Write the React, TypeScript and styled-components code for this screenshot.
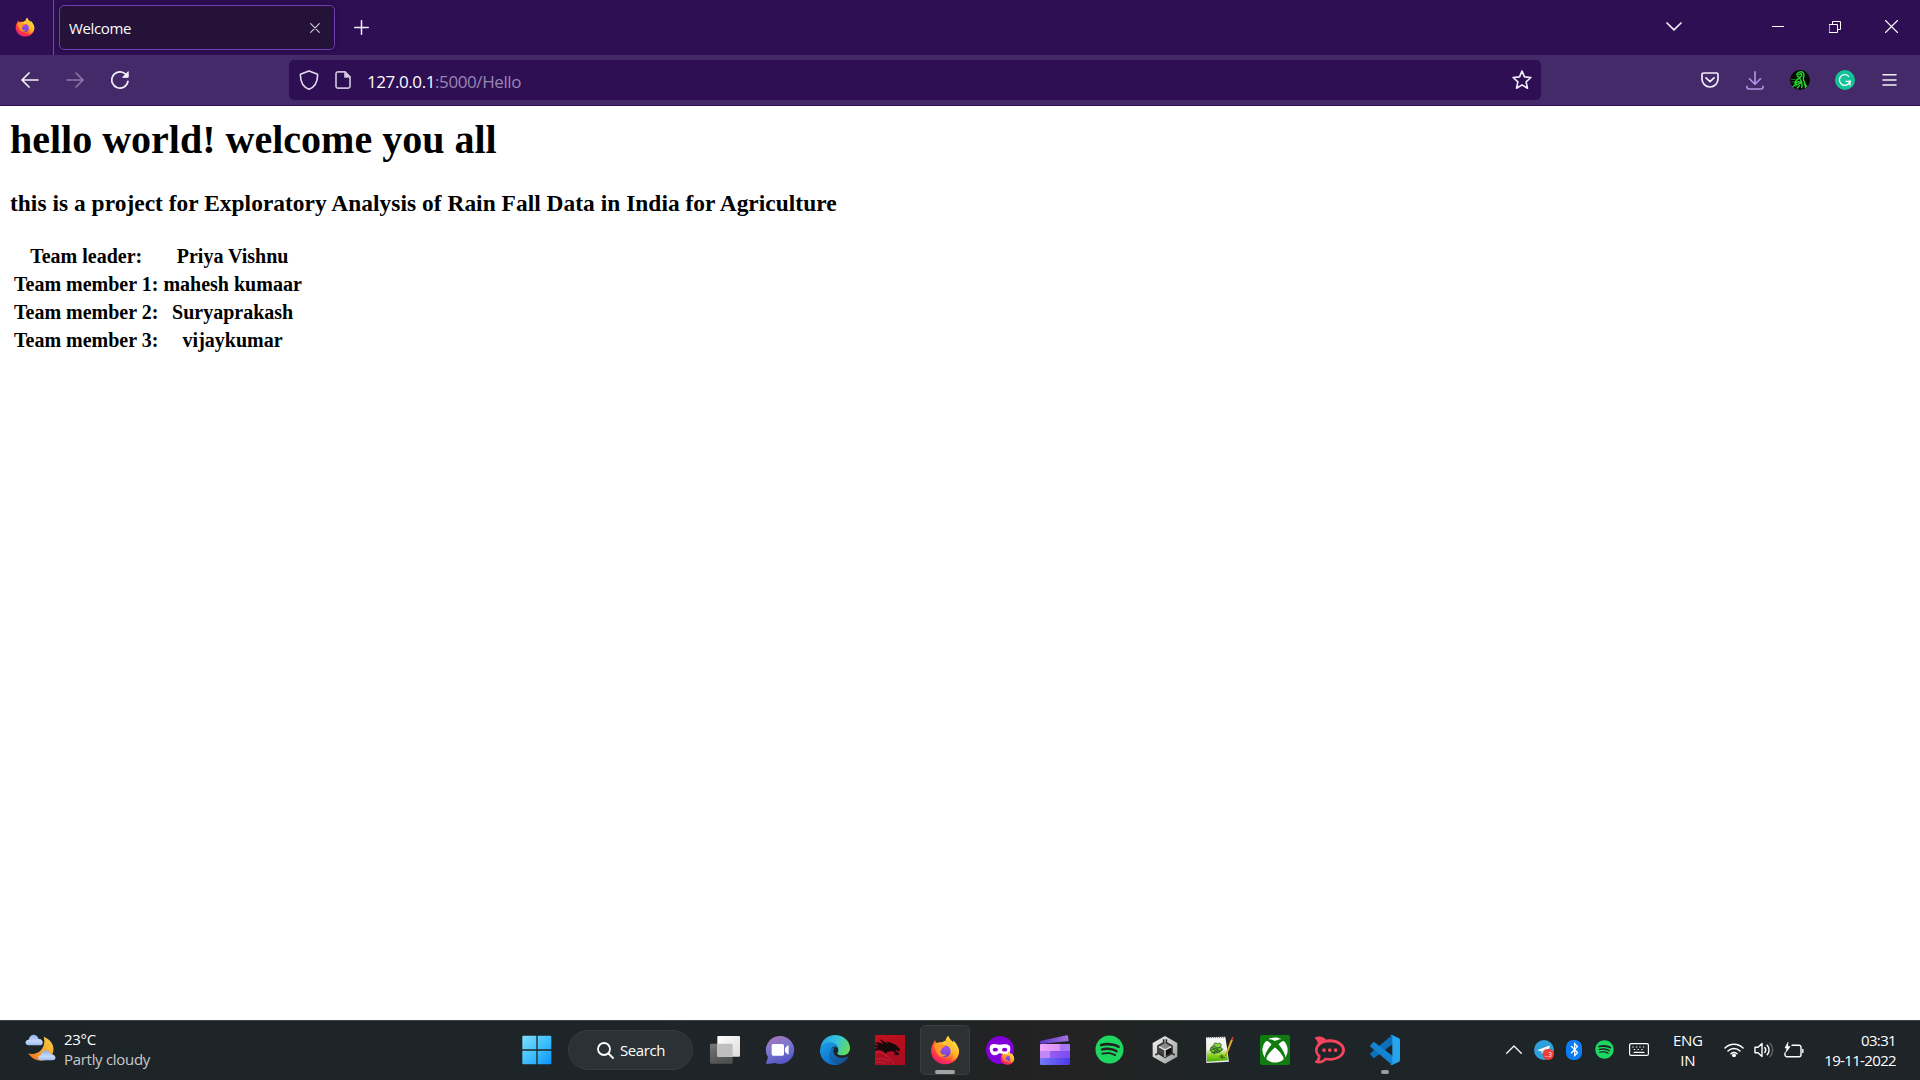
import React from "react";
import styled, { createGlobalStyle } from "styled-components";
import { FaSpotify, FaXbox, FaBluetoothB } from "react-icons/fa";
import { SiRocketdotchat } from "react-icons/si";

const GlobalStyle = createGlobalStyle`
  * { box-sizing: border-box; }
  html, body { margin: 0; padding: 0; background: #fff; overflow: hidden; }
  svg { display: block; flex: none; }
`;

const UI = `"Open Sans", "Noto Sans", sans-serif`;

const Screen = styled.div`
  width: 1920px;
  height: 1080px;
  display: flex;
  flex-direction: column;
  overflow: hidden;
  font-family: ${UI};
`;

/* ---------- browser chrome ---------- */

const TabBar = styled.header`
  height: 55px;
  flex: none;
  display: flex;
  background: #2e0f54;
`;

const PinnedArea = styled.div`
  width: 54px;
  border-right: 1px solid #6b5388;
  padding: 17px 0 0 15px;
`;

const Tab = styled.div`
  width: 276px;
  height: 45px;
  margin: 5px 0 0 5px;
  padding: 0 14px 0 9px;
  display: flex;
  align-items: center;
  justify-content: space-between;
  background: #251238;
  border: 1px solid #6f3fb5;
  border-radius: 5px;
  box-shadow: 0 0 5px rgba(10, 0, 25, 0.45);
`;

const TabTitle = styled.span`
  font-size: 15px;
  line-height: 20px;
  letter-spacing: -0.35px;
  color: #fbfbfe;
`;

const NewTab = styled.div`
  padding: 20px 0 0 19px;
`;

const WindowControls = styled.div`
  margin-left: auto;
  display: flex;
  height: 53px;
  align-items: center;
`;

const ControlSlot = styled.div<{ $w: number }>`
  width: ${(p) => p.$w}px;
  display: flex;
  justify-content: center;
`;

const Toolbar = styled.nav`
  height: 51px;
  flex: none;
  display: flex;
  align-items: flex-start;
  background: #452a6a;
  border-bottom: 1px solid #2e0f54;
`;

const ToolGroup = styled.div<{ $w: number; $pad: number }>`
  width: ${(p) => p.$w}px;
  height: 50px;
  padding-left: ${(p) => p.$pad}px;
  display: flex;
  align-items: center;
`;

const ToolButton = styled.div`
  width: 45px;
  display: flex;
  justify-content: center;
`;

const AddressBar = styled.div`
  width: 1252px;
  height: 40px;
  margin-top: 5px;
  padding: 0 9px 0 10px;
  display: flex;
  align-items: center;
  gap: 16px;
  background: #2e0f54;
  border-radius: 5px;
`;

const Url = styled.div`
  padding-top: 3px;
  font-size: 17px;
  line-height: 24px;
  letter-spacing: -0.41px;
  color: #fbfbfe;
  flex: 1;
`;

const UrlDim = styled.span`
  color: #9a86b3;
`;

/* ---------- page ---------- */

const Page = styled.main`
  flex: 1;
  padding: 11px 10px;
  background: #fff;
  color: #000;
  font-family: "Liberation Serif", "Times New Roman", serif;
`;

const Heading = styled.h1`
  margin: 0 0 27px;
  font-size: 40px;
  line-height: 46px;
  font-weight: bold;
`;

const SubHeading = styled.h3`
  margin: 0 0 24px;
  font-size: 23.4px;
  line-height: 27px;
  letter-spacing: 0.037px;
  font-weight: bold;
`;

const TeamTable = styled.table`
  border-spacing: 3px;
  font-size: 20px;
  line-height: 23px;
`;

const Cell = styled.th`
  padding: 1px;
  text-align: center;
  font-weight: bold;
  white-space: nowrap;
`;

/* ---------- taskbar ---------- */

const Taskbar = styled.footer`
  height: 60px;
  flex: none;
  display: flex;
  border-top: 1px solid #3c4345;
  background: linear-gradient(90deg, #1c2427 0%, #1e2528 25%, #1f2427 45%, #222222 53%, #222322 57%, #1e2528 65%, #1e2427 100%);
`;

const Weather = styled.div`
  width: 509px;
  padding: 8px 0 0 25px;
  display: flex;
  gap: 8px;
`;

const WeatherGlyph = styled.div`
  padding-top: 5px;
`;

const TwoLines = styled.div<{ $align?: string; $track?: number }>`
  font-size: 15px;
  line-height: 20px;
  letter-spacing: ${(p) => p.$track ?? -0.3}px;
  color: #fff;
  text-align: ${(p) => p.$align || "left"};
  white-space: nowrap;
`;

const Muted = styled.div`
  color: #c8cbcc;
`;

const Slot = styled.div<{ $w?: number }>`
  width: ${(p) => p.$w || 55}px;
  height: 59px;
  display: flex;
  flex-direction: column;
  align-items: center;
  padding-top: 4px;
`;

const AppTile = styled.div<{ $active?: boolean }>`
  width: 50px;
  height: 50px;
  border-radius: 5px;
  padding-top: 9px;
  display: flex;
  flex-direction: column;
  align-items: center;
  border: 1px solid ${(p) => (p.$active ? "#3a3e3f" : "transparent")};
  background: ${(p) => (p.$active ? "#2d3132" : "transparent")};
`;

const RunMark = styled.div<{ $w: number; $c: string }>`
  width: ${(p) => p.$w}px;
  height: 4px;
  margin-top: 5px;
  border-radius: 2px;
  background: ${(p) => p.$c};
`;

const SearchPill = styled.div`
  width: 125px;
  height: 40px;
  margin: 9px 4px 0 4px;
  padding-left: 28px;
  border: 1px solid #343c3f;
  border-radius: 20px;
  background: #2b3235;
  display: flex;
  align-items: center;
  gap: 6px;
  color: #fff;
  font-size: 15px;
  letter-spacing: -0.4px;
`;

const SearchLabel = styled.span`
  padding-bottom: 1px;
`;

const Tray = styled.div`
  margin-left: auto;
  display: flex;
  align-items: center;
  height: 57px;
`;

/* ---------- icons ---------- */

type P = { size?: number; id?: string };

const Firefox = ({ size = 30, id = "a" }: P) => (
  <svg width={size} height={size} viewBox="0 0 90 90">
    <defs>
      <radialGradient id={`ff1${id}`} cx="0.75" cy="0.12" r="1">
        <stop offset="0" stopColor="#fff44f" />
        <stop offset="0.3" stopColor="#ffc630" />
        <stop offset="0.52" stopColor="#ff8a1c" />
        <stop offset="0.76" stopColor="#ff3647" />
        <stop offset="1" stopColor="#e31587" />
      </radialGradient>
      <radialGradient id={`ff2${id}`} cx="0.6" cy="0.2" r="0.9">
        <stop offset="0" stopColor="#a34cf5" />
        <stop offset="1" stopColor="#5a45d6" />
      </radialGradient>
      <linearGradient id={`ff3${id}`} x1="0.8" y1="0" x2="0.3" y2="1">
        <stop offset="0" stopColor="#fff04d" />
        <stop offset="0.6" stopColor="#ffb52b" />
        <stop offset="1" stopColor="#ff7c22" />
      </linearGradient>
    </defs>
    <path fill={`url(#ff1${id})`} d="M9 26C11 22 13 19 15 15C16 19 18 22 20 24C25 21 31 21 36 22C39 20 42 18 45 17L54 24L72 22C83 32 88 43 87 52C86 73 69 88 46 88C22 88 3 70 3 47C3 39 5 33 9 26Z" />
    <path fill={`url(#ff3${id})`} d="M47 24C45 14 50 5 56 2C57 12 65 16 70 22C70 20 70 18 69 16C79 24 87 38 87 51C85 66 75 76 62 78C71 69 72 55 66 45C61 36 49 34 47 24Z" />
    <circle cx="44" cy="49" r="18" fill={`url(#ff2${id})`} />
    <path fill="#ff9825" d="M11 31C17 25 26 25 34 29C37 30 44 30 46 32C45 37 38 37 36 40C36 44 34 47 31 49C32 58 40 61 49 58C45 66 34 68 27 62C19 55 16 42 11 31Z" />
    <path fill="#fff" opacity="0.12" d="M20 24C25 21 31 21 36 22C33 26 32 28 31 30C25 27 18 28 14 31C15 28 17 26 20 24Z" />
  </svg>
);

const Line = ({ w, h, vb, sw = 1.5, c = "#f3effa", children }: { w: number; h: number; vb?: string; sw?: number; c?: string; children: React.ReactNode }) => (
  <svg width={w} height={h} viewBox={vb || `0 0 ${w} ${h}`} fill="none" stroke={c} strokeWidth={sw} strokeLinecap="round" strokeLinejoin="round">
    {children}
  </svg>
);

const GreenDragon = () => (
  <svg width="20" height="20" viewBox="0 0 60 60">
    <circle cx="30" cy="30" r="30" fill="#050805" />
    <g fill="none" stroke="#22dd2c" strokeWidth="4" strokeLinecap="round">
      <path d="M20 14C24 3 38 3 41 11C45 19 39 22 40 28C41 36 49 40 46 53" />
      <path d="M24 15L33 11L36 18L28 22L22 19M31 24C20 28 14 35 15 43C20 36 27 33 31 37" />
      <path d="M9 50C17 41 22 47 27 41C34 36 39 44 35 53M31 29L36 39M22 54L29 46M43 42L50 48" />
    </g>
    <path d="M3 29L12 28L20 31M4 37L14 35M12 43L20 51" fill="none" stroke="#129a1c" strokeWidth="2.5" />
  </svg>
);

const Grammarly = () => (
  <svg width="20" height="20" viewBox="0 0 60 60">
    <circle cx="30" cy="30" r="30" fill="#15c39a" />
    <path d="M41 19A16 16 0 1 0 45 33" fill="none" stroke="#fff" strokeWidth="4" strokeLinecap="round" />
    <path d="M33 34H45V45" fill="none" stroke="#fff" strokeWidth="4" strokeLinecap="round" strokeLinejoin="round" />
  </svg>
);

const WeatherIcon = () => (
  <svg width="31" height="29" viewBox="0 0 93 87">
    <defs>
      <linearGradient id="moon" x1="1" y1="0" x2="0.2" y2="1">
        <stop offset="0" stopColor="#f8ce45" />
        <stop offset="0.6" stopColor="#f5a531" />
        <stop offset="1" stopColor="#ee7420" />
      </linearGradient>
      <linearGradient id="cloud" x1="0" y1="0" x2="0" y2="1">
        <stop offset="0" stopColor="#8fb0ee" />
        <stop offset="0.6" stopColor="#c7d9fa" />
        <stop offset="1" stopColor="#9dbcf3" />
      </linearGradient>
    </defs>
    <path fill="url(#moon)" d="M56 8C79 17 91 37 83 58C74 83 33 92 9 58C20 62 38 60 49 47C58 36 60 23 56 8Z" />
    <path fill="url(#cloud)" d="M11 34C-1 34 -2 18 11 17C15 -3 37 -1 40 14C56 14 57 33 46 34Z" />
    <path fill="url(#cloud)" d="M48 79C37 79 36 65 48 63C52 46 72 46 76 60C94 60 96 78 83 79Z" />
  </svg>
);

const WindowsLogo = () => (
  <svg width="30" height="30" viewBox="0 0 90 90">
    <defs>
      <linearGradient id="win" gradientUnits="userSpaceOnUse" x1="0" y1="0" x2="90" y2="90">
        <stop offset="0" stopColor="#82e0ff" />
        <stop offset="0.5" stopColor="#3fc0fc" />
        <stop offset="1" stopColor="#0b92fa" />
      </linearGradient>
    </defs>
    <path fill="url(#win)" d="M4 2H43V43H1V5Q1 2 4 2ZM47 2H85Q88 2 88 5V43H47ZM1 47H43V88H4Q1 88 1 85ZM47 47H88V85Q88 88 85 88H47Z" />
  </svg>
);

const TaskView = () => (
  <svg width="30" height="30" viewBox="0 0 90 90">
    <defs>
      <linearGradient id="tvw" x1="0" y1="0" x2="1" y2="1"><stop offset="0" stopColor="#fff" /><stop offset="1" stopColor="#dcdcdc" /></linearGradient>
      <linearGradient id="tvg" x1="0" y1="0" x2="0.4" y2="1"><stop offset="0" stopColor="#777" /><stop offset="1" stopColor="#505151" /></linearGradient>
    </defs>
    <rect x="0" y="26" width="68" height="60" rx="3" fill="url(#tvg)" />
    <rect x="22" y="3" width="68" height="62" rx="3" fill="url(#tvw)" />
    <path d="M22 26H65Q68 26 68 29V65H25Q22 65 22 62Z" fill="#bfbfbf" />
  </svg>
);

const Chat = () => (
  <svg width="30" height="30" viewBox="0 0 90 90">
    <defs>
      <linearGradient id="chat" x1="0.2" y1="0" x2="0.6" y2="1">
        <stop offset="0" stopColor="#a974b8" />
        <stop offset="0.45" stopColor="#7a78d2" />
        <stop offset="1" stopColor="#5154c4" />
      </linearGradient>
    </defs>
    <path fill="url(#chat)" d="M46 3A42 42 0 1 1 30 84L7 87Q2 87 4 82L9 67A42 42 0 0 1 46 3Z" />
    <rect x="20" y="27" width="37" height="35" rx="5" fill="#fff" />
    <path d="M60 40L67 32Q71 29 71 33V56Q71 60 67 57L60 50Z" fill="#fff" />
  </svg>
);

const Edge = () => (
  <svg width="30" height="30" viewBox="0 0 90 90">
    <defs>
      <linearGradient id="ed1" x1="0" y1="0.3" x2="1" y2="0.6"><stop offset="0" stopColor="#24a6e4" /><stop offset="0.5" stopColor="#33c3dc" /><stop offset="1" stopColor="#67dd55" /></linearGradient>
      <linearGradient id="ed2" x1="0" y1="0" x2="0.6" y2="1"><stop offset="0" stopColor="#1fa1e6" /><stop offset="1" stopColor="#0b6cc9" /></linearGradient>
      <linearGradient id="ed3" x1="0" y1="0" x2="1" y2="0.8"><stop offset="0" stopColor="#1178c8" /><stop offset="1" stopColor="#164c8d" /></linearGradient>
    </defs>
    <path fill="url(#ed1)" d="M1 39C5 15 23 0 45 0C70 0 90 18 90 39C90 53 80 61 68 61C58 61 51 58 52 54C57 49 55 42 52 36C40 20 14 20 1 39Z" />
    <path fill="url(#ed2)" d="M0 45C3 28 16 22 30 22C45 22 55 32 56 42C49 31 38 32 33 44C27 64 40 86 61 86C53 90 48 90 44 90C20 90 -1 70 0 45Z" />
    <path fill="url(#ed3)" d="M45 36C36 38 26 47 27 60C28 75 38 87 50 88C65 88 76 80 84 69C86 66 83 64 80 66C60 74 41 65 40 49C40 43 42 39 45 36Z" />
  </svg>
);

const DragonTile = () => (
  <svg width="30" height="30" viewBox="0 0 90 90">
    <defs><linearGradient id="dr" x1="0" y1="0" x2="0.3" y2="1"><stop offset="0" stopColor="#c0101c" /><stop offset="1" stopColor="#a80d22" /></linearGradient></defs>
    <rect width="90" height="90" fill="url(#dr)" />
    <path fill="#160a0d" d="M0 24C9 21 17 24 25 27L13 12C25 18 34 24 41 26L34 19C47 23 59 26 67 34L75 43L74 50L67 46L60 47L70 53L73 59L62 61L56 58L62 54L54 49C46 49 40 49 35 52C39 57 30 55 26 50C18 45 10 43 0 48V42L10 38L0 36V31L12 31Z" />
    <path fill="none" stroke="#e0788a" strokeOpacity="0.5" strokeWidth="1.5" d="M0 52C12 49 24 53 35 62M0 74C16 69 32 71 45 80M0 84C14 79 27 82 36 89M30 60C44 68 54 78 59 90" />
  </svg>
);

const PrivateBrowsing = () => (
  <svg width="30" height="30" viewBox="0 0 90 90">
    <circle cx="45" cy="45" r="42" fill="#8000d7" />
    <path fill="#fff" d="M14 40C14 28 23 26 33 28C40 30 48 30 56 28C67 26 76 29 76 40C76 54 69 61 60 61C52 61 50 55 45 55C40 55 37 61 30 61C20 61 14 53 14 40Z" />
    <ellipse cx="31" cy="44" rx="8" ry="5.5" fill="#8000d7" />
    <ellipse cx="59" cy="44" rx="8" ry="5.5" fill="#8000d7" />
    <svg x="46" y="47" width="43" height="43" viewBox="0 0 90 90">
      <Firefox size={90} id="pb" />
    </svg>
  </svg>
);

const Clipchamp = () => (
  <svg width="30" height="30" viewBox="0 0 90 90">
    <defs>
      <linearGradient id="cc1" x1="0" y1="0" x2="1" y2="0"><stop offset="0" stopColor="#5c35c4" /><stop offset="1" stopColor="#a275e0" /></linearGradient>
      <linearGradient id="cc2" x1="0" y1="0" x2="1" y2="0"><stop offset="0" stopColor="#f0a6fa" /><stop offset="1" stopColor="#ca86f4" /></linearGradient>
      <linearGradient id="cc3" x1="0" y1="0" x2="1" y2="0"><stop offset="0" stopColor="#a066f0" /><stop offset="1" stopColor="#7a4bee" /></linearGradient>
      <linearGradient id="cc4" x1="0" y1="0" x2="1" y2="0"><stop offset="0" stopColor="#7678fa" /><stop offset="1" stopColor="#4e38e8" /></linearGradient>
    </defs>
    <path fill="url(#cc1)" d="M3 17L80 1Q84 0 84 4L86 18L3 27Q0 27 0 22Q0 18 3 17Z" />
    <path fill="url(#cc2)" d="M3 27H86Q90 27 90 31V48H0V30Q0 27 3 27Z" />
    <path fill="#a777f6" d="M60 27H86Q90 27 90 31V48H60Z" />
    <path fill="url(#cc3)" d="M0 48H90V69H0Z" />
    <path fill="#c286f7" d="M0 48H30V69H0Z" />
    <path fill="url(#cc4)" d="M0 69H90V86Q90 90 86 90H4Q0 90 0 86Z" />
  </svg>
);

const Unity = () => (
  <svg width="30" height="30" viewBox="0 0 90 90">
    <defs><linearGradient id="un" x1="0" y1="0" x2="1" y2="1"><stop offset="0" stopColor="#f5f5f5" /><stop offset="1" stopColor="#999" /></linearGradient></defs>
    <path fill="url(#un)" d="M45 3L82 24V65L45 86L8 65V24Z" />
    <path fill="#444" d="M45 45L25 33V56L45 68Z" />
    <path fill="#111" d="M45 45L66 33V56L45 68Z" />
    <path fill="#8a8a8a" d="M45 45L25 33L45 22L66 33Z" />
    <path fill="none" stroke="#303030" strokeWidth="5" d="M41 13V23L24 33V56M49 13V23L66 33V56M16 60L25 55L45 67L66 55L74 60" />
    <path fill="none" stroke="#e4e4e4" strokeWidth="4" d="M45 66V45L27 35M45 45L64 35" />
  </svg>
);

const NotepadPP = () => (
  <svg width="30" height="30" viewBox="0 0 90 90">
    <defs><linearGradient id="np" x1="0" y1="0" x2="0" y2="1"><stop offset="0" stopColor="#f7f7f7" /><stop offset="0.45" stopColor="#eef6dd" /><stop offset="0.72" stopColor="#8ad51c" /><stop offset="1" stopColor="#47a80b" /></linearGradient></defs>
    <path fill="#eee" d="M3 7L61 5L72 80L4 84Z" />
    <path fill="url(#np)" d="M5 12L61 12L69 76L6 80Z" />
    <path stroke="#777" strokeWidth="3" strokeDasharray="3 3" d="M6 8L60 7" />
    <g fill="none" stroke="#20301c" strokeWidth="2">
      <path fill="#63c32b" d="M19 36C24 30 36 33 40 38C49 34 54 41 49 46C43 53 26 58 19 50C14 46 16 41 19 36Z" />
      <path fill="#83d54b" d="M27 32C24 25 33 21 37 27C41 21 52 27 48 34C43 40 33 39 27 32Z" />
      <path d="M14 47L29 40L46 49L55 42M22 36L31 47L27 59M37 39L35 52L45 51M19 54L32 50" />
    </g>
    <path stroke="#e7a52b" strokeWidth="6" d="M81 14L64 57" />
    <path stroke="#b33f31" strokeWidth="6" d="M84 6L81 14" />
    <path stroke="#3b3520" strokeWidth="2" d="M64 57L62 62M42 67L50 59L48 70L54 62L52 69L60 67" fill="none" />
  </svg>
);

const XboxTile = styled.div`
  width: 30px;
  height: 30px;
  border-radius: 2px;
  background: #107c10;
  color: #fff;
  display: flex;
  align-items: center;
  justify-content: center;
`;

const VSCode = () => (
  <svg width="30" height="30" viewBox="0 0 90 90">
    <path fill="#0c70b9" d="M2 60Q-1 57 2 54L64 2Q66 0 69 1V26L14 68Q11 70 8 67Z" />
    <path fill="#1484d0" d="M2 30Q-1 33 2 36L64 88Q66 90 69 89V64L14 22Q11 20 8 23Z" />
    <path fill="#26a4ee" d="M66 0L86 9Q90 11 90 15V75Q90 79 86 81L66 90Q63 91 61 87Q67 89 67 83V7Q67 1 61 3Q63 -1 66 0Z" />
  </svg>
);

const Telegram = () => (
  <svg width="20" height="20" viewBox="0 0 60 60">
    <circle cx="30" cy="30" r="30" fill="#2fa0da" />
    <path fill="#fff" d="M9 31L45 17Q48 16 47 20L42 40L30 35L24 41L22 34Z" />
    <path fill="#a9cfe6" d="M22 34L41 21L27 35L24 41Z" />
    <circle cx="43" cy="43" r="17" fill="#f23c34" />
    <text x="43" y="50" fontFamily="Open Sans, sans-serif" fontSize="19" fill="#fff" textAnchor="middle">..3</text>
  </svg>
);

const BluetoothPill = styled.div`
  width: 16px;
  height: 20px;
  border-radius: 7px;
  background: #0a7cf5;
  color: #fff;
  display: flex;
  align-items: center;
  justify-content: center;
`;

const team: [string, string][] = [
  ["Team leader:", "Priya Vishnu"],
  ["Team member 1:", "mahesh kumaar"],
  ["Team member 2:", "Suryaprakash"],
  ["Team member 3:", "vijaykumar"],
];

const apps: { icon: React.ReactNode; active?: boolean; mark?: [number, string] }[] = [
  { icon: <TaskView /> },
  { icon: <Chat /> },
  { icon: <Edge /> },
  { icon: <DragonTile /> },
  { icon: <Firefox id="tb" />, active: true, mark: [20, "#a3a5a3"] },
  { icon: <PrivateBrowsing /> },
  { icon: <Clipchamp /> },
  { icon: <FaSpotify size={29} color="#1ed760" /> },
  { icon: <Unity /> },
  { icon: <NotepadPP /> },
  { icon: <XboxTile><FaXbox size={26} /></XboxTile> },
  { icon: <SiRocketdotchat size={30} color="#f5455c" /> },
  { icon: <VSCode />, mark: [8, "#9a9d9e"] },
];

export default function App() {
  return (
    <Screen>
      <GlobalStyle />
      <TabBar>
        <PinnedArea><Firefox size={20} id="pin" /></PinnedArea>
        <Tab>
          <TabTitle>Welcome</TabTitle>
          <Line w={10} h={10} sw={1.1} c="#d5d0dc"><path d="M.7.7L9.3 9.3M9.3.7L.7 9.3" /></Line>
        </Tab>
        <NewTab><Line w={15} h={15}><path d="M7.5.7V14.3M.7 7.5H14.3" /></Line></NewTab>
        <WindowControls>
          <ControlSlot $w={104}><Line w={16} h={9} sw={1.7}><path d="M1 1L8 7.8L15 1" /></Line></ControlSlot>
          <ControlSlot $w={104}><Line w={12} h={1} sw={2} c="#fff"><path d="M0 .5H12" /></Line></ControlSlot>
          <ControlSlot $w={10}><Line w={12} h={12} sw={1} c="#fff"><path d="M.5 3.5H8.5V11.5H.5ZM3.5 3.5V.5H11.5V8.5H8.5" /></Line></ControlSlot>
          <ControlSlot $w={103}><Line w={13} h={13} sw={1.1} c="#fff"><path d="M.5.5L12.5 12.5M12.5.5L.5 12.5" /></Line></ControlSlot>
        </WindowControls>
        <WindowEdge />
      </TabBar>
      <Toolbar>
        <ToolGroup $w={289} $pad={7}>
          <ToolButton><Line w={18} h={16} sw={1.7}><path d="M17 8H1.2M8 1L1 8L8 15" /></Line></ToolButton>
          <ToolButton><Line w={18} h={16} sw={1.5} c="#8d7aa5"><path d="M1 8H16.8M10 1L17 8L10 15" /></Line></ToolButton>
          <ToolButton>
            <Line w={18} h={18} sw={1.7}>
              <path d="M16.9 10.3A8.1 8.1 0 1 1 13.6 2.4L15.5 4" />
              <path d="M17.2 1V6.3H12Z" fill="#f3effa" strokeWidth="1" />
            </Line>
          </ToolButton>
        </ToolGroup>
        <AddressBar>
          <Line w={20} h={20} sw={1.6} c="#e3dded"><path d="M10 .9L18 4.1C18.5 4.3 18.7 4.7 18.6 5.2C18.5 12 16 17 10 19.2C4 17 1.5 12 1.4 5.2C1.3 4.7 1.5 4.3 2 4.1Z" /></Line>
          <Line w={16} h={18} sw={1.7} c="#c9bfd9">
            <path d="M3 .9H10L15 6V15A2 2 0 0 1 13 17.1H3A2 2 0 0 1 1 15V3A2 2 0 0 1 3 .9Z" />
            <path d="M10 1V6H15Z" fill="#e6e0f0" />
          </Line>
          <Url>127.0.0.1<UrlDim>:5000/Hello</UrlDim></Url>
          <Line w={20} h={20} sw={1.6}><path d="M10 1.1L12.5 6.9L18.9 7.5L14.1 11.8L15.5 18.2L10 14.9L4.5 18.2L5.9 11.8L1.1 7.5L7.5 6.9Z" /></Line>
        </AddressBar>
        <ToolGroup $w={379} $pad={146}>
          <ToolButton><Line w={18} h={16} sw={1.7}><path d="M2.6 1H15.4A1.6 1.6 0 0 1 17 2.6V7A8 8 0 0 1 1 7V2.6A1.6 1.6 0 0 1 2.6 1ZM5 5.8L9 9.6L13 5.8" /></Line></ToolButton>
          <ToolButton><Line w={18} h={19} sw={1.6} c="#b894e6"><path d="M9 .8V13M3.5 7.8L9 13.2L14.5 7.8M1 15.2V16A2 2 0 0 0 3 18H15A2 2 0 0 0 17 16V15.2" /></Line></ToolButton>
          <ToolButton><GreenDragon /></ToolButton>
          <ToolButton><Grammarly /></ToolButton>
          <ToolButton><Line w={15} h={14} sw={1.5}><path d="M1 1.7H14M1 6.9H14M1 12.1H14" /></Line></ToolButton>
        </ToolGroup>
      </Toolbar>
      <Page>
        <Heading>hello world! welcome you all</Heading>
        <SubHeading>this is a project for Exploratory Analysis of Rain Fall Data in India for Agriculture</SubHeading>
        <TeamTable>
          <tbody>
            {team.map(([role, name]) => (
              <tr key={role}><Cell>{role}</Cell><Cell>{name}</Cell></tr>
            ))}
          </tbody>
        </TeamTable>
      </Page>
      <Taskbar>
        <Weather>
          <WeatherGlyph><WeatherIcon /></WeatherGlyph>
          <TwoLines>23°C<Muted>Partly cloudy</Muted></TwoLines>
        </Weather>
        <Slot><AppTile><WindowsLogo /></AppTile></Slot>
        <SearchPill>
          <Line w={17} h={17} sw={1.8} c="#fff"><circle cx="7" cy="7" r="6" /><path d="M11.5 11.5L16 16" /></Line>
          <SearchLabel>Search</SearchLabel>
        </SearchPill>
        {apps.map((a, i) => (
          <Slot key={i}>
            <AppTile $active={a.active}>
              {a.icon}
              {a.mark && <RunMark $w={a.mark[0]} $c={a.mark[1]} />}
            </AppTile>
          </Slot>
        ))}
        <Tray>
          <ControlSlot $w={30}><Line w={16} h={9} sw={1.3} c="#fff"><path d="M.7 8.3L8 1L15.3 8.3" /></Line></ControlSlot>
          <ControlSlot $w={30}><Telegram /></ControlSlot>
          <ControlSlot $w={30}><BluetoothPill><FaBluetoothB size={15} /></BluetoothPill></ControlSlot>
          <ControlSlot $w={30}><FaSpotify size={19} color="#1ed760" /></ControlSlot>
          <ControlSlot $w={40}>
            <Line w={20} h={13} sw={1.2} c="#fff">
              <rect x=".6" y=".6" width="18.8" height="11.8" rx="1.5" />
              <path d="M3.8 4H4.2M7.3 4H7.7M10.8 4H11.2M14.3 4H14.7M5.3 6.5H5.7M9 6.5H9.4M12.8 6.5H13.2M5 9.3H15" />
            </Line>
          </ControlSlot>
          <ControlSlot $w={57}><TwoLines $align="center">ENG<br />IN</TwoLines></ControlSlot>
          <ControlSlot $w={36}>
            <Line w={20} h={15} sw={1.5} c="#fff">
              <path d="M1 6A12.6 12.6 0 0 1 19 6M4 9A8.5 8.5 0 0 1 16 9M7 11.7A4.3 4.3 0 0 1 13 11.7" />
              <circle cx="10" cy="13.2" r="1.2" fill="#fff" />
            </Line>
          </ControlSlot>
          <ControlSlot $w={24}>
            <Line w={20} h={16} sw={1.4} c="#fff">
              <path d="M1 5.3H4L8 1.5V14.5L4 10.7H1Z" />
              <path d="M10.8 5.5A4 4 0 0 1 10.8 10.5M13.2 3.2A7 7 0 0 1 13.2 12.8" />
              <path d="M16 1.2A10 10 0 0 1 16 14.8" stroke="#5c6264" />
            </Line>
          </ControlSlot>
          <ControlSlot $w={36}>
            <Line w={20} h={16} sw={1.4} c="#fff">
              <path d="M8 3.2H15A2 2 0 0 1 17 5.2V12.8A2 2 0 0 1 15 14.8H3A2 2 0 0 1 1 12.8V11M18.8 7.5V10.5" />
              <path d="M3.8.6L1 6H3L1.8 10.4L6.2 4.6H4Z" fill="#fff" strokeWidth=".6" />
            </Line>
          </ControlSlot>
          <ControlSlot $w={12} />
          <TwoLines $align="right" $track={-0.65}>03:31<br />19-11-2022</TwoLines>
          <ControlSlot $w={24} />
        </Tray>
      </Taskbar>
    </Screen>
  );
}

const WindowEdge = styled.div`
  width: 0;
  margin-right: -23px;
`;
